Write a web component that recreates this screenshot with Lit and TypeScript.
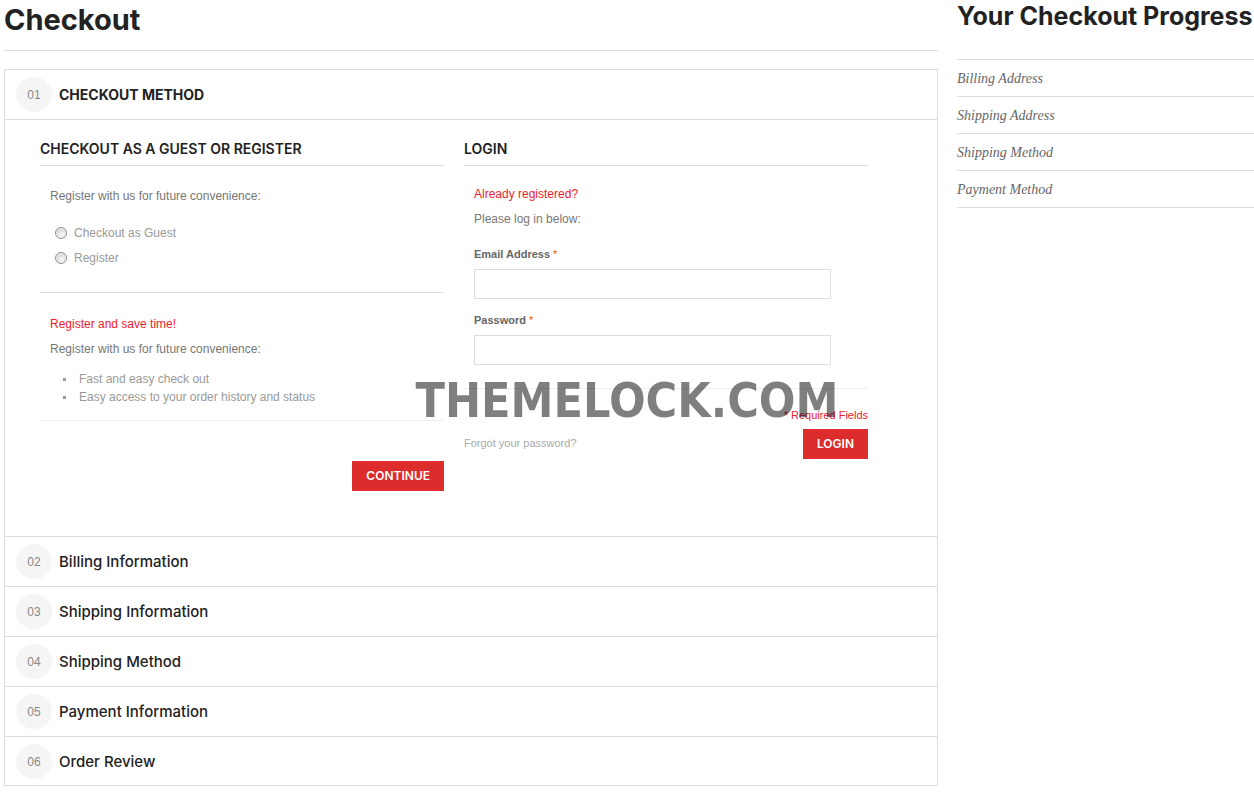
import { LitElement, html, css, nothing } from "lit";
import { customElement, state } from "lit/decorators.js";

interface Step {
  title: string;
}

const STEPS: Step[] = [
  { title: "Checkout Method" },
  { title: "Billing Information" },
  { title: "Shipping Information" },
  { title: "Shipping Method" },
  { title: "Payment Information" },
  { title: "Order Review" },
];

const PROGRESS = ["Billing Address", "Shipping Address", "Shipping Method", "Payment Method"];

@customElement("checkout-method")
class CheckoutMethod extends LitElement {
  static styles = css`
    :host {
      display: grid;
      grid-template-columns: 1fr 1fr;
      gap: 20px;
      padding: 19px 69px 45px 35px;
      font: 12px/18px "Liberation Sans", Arial, sans-serif;
      color: #777;
    }
    h3 {
      margin: 0;
      padding-bottom: 6px;
      border-bottom: 1px solid #ddd;
      font: 600 14px/20px Inter, sans-serif;
      color: #222;
      text-transform: uppercase;
    }
    h4,
    p,
    ul,
    form {
      margin: 0;
      padding: 0;
    }
    h4 {
      margin-bottom: 7px;
      font-size: 12px;
      font-weight: 400;
      color: #ee1c2e;
    }
    .block {
      padding: 21px 10px 0;
    }
    .login .block {
      padding-top: 19px;
    }
    .choices {
      display: grid;
      gap: 7px;
      padding: 19px 4px 25px;
      border: 0;
      margin: 0;
    }
    .choice {
      display: flex;
      align-items: center;
      gap: 7px;
      color: #999;
    }
    .choice input {
      appearance: none;
      width: 12px;
      height: 12px;
      margin: 0 0 0 1px;
      border: 1px solid #8e8f8f;
      border-radius: 50%;
      background: radial-gradient(circle at 60% 65%, #f4f4f4 0 15%, #c8cbce 75%);
      box-shadow: inset 0 0 0 1px #f4f4f4;
    }
    .choice input:checked {
      background: radial-gradient(circle, #333 0 30%, #ddd 40%);
    }
    .benefits {
      border-top: 1px solid #ddd;
      border-bottom: 1px solid #eee;
      padding: 22px 10px 14px;
    }
    ul {
      list-style: none;
      margin-top: 12px;
      color: #999;
    }
    li {
      display: flex;
      align-items: center;
      gap: 13px;
      padding-left: 13px;
    }
    li::before {
      content: "";
      width: 3px;
      height: 3px;
      background: #999;
    }
    .actions {
      display: flex;
      justify-content: flex-end;
      padding-top: 40px;
    }
    button {
      height: 30px;
      padding: 0 14px;
      border: 0;
      border-radius: 0;
      background: #dc2c2c;
      color: #fff;
      font: 600 12px/30px Inter, sans-serif;
      text-transform: uppercase;
      cursor: pointer;
    }
    .field {
      display: block;
      margin-top: 12px;
    }
    .field.first {
      margin-top: 17px;
    }
    label.name {
      display: block;
      margin-bottom: 6px;
      font-size: 11px;
      font-weight: 700;
      color: #666;
    }
    .star {
      color: #eb540a;
      font-weight: 400;
    }
    .field input {
      display: block;
      box-sizing: border-box;
      width: 93%;
      height: 30px;
      padding: 0 8px;
      border: 1px solid #ddd;
      background: #fff;
      font: inherit;
      color: #666;
    }
    .required {
      margin-top: 23px;
      padding: 17px 0 5px;
      border-top: 1px solid #eee;
      font-size: 11px;
      text-align: right;
      color: #ee1c2e;
    }
    .foot {
      display: flex;
      align-items: flex-start;
      justify-content: space-between;
    }
    .foot a {
      font-size: 11px;
      line-height: 28px;
      color: #aaa;
      text-decoration: none;
    }
  `;

  render() {
    return html`
      <section>
        <h3>Checkout as a Guest or Register</h3>
        <div class="block">
          <p>Register with us for future convenience:</p>
          <fieldset class="choices" aria-label="Checkout type">
            <label class="choice"><input type="radio" name="method" value="guest" />Checkout as Guest</label>
            <label class="choice"><input type="radio" name="method" value="register" />Register</label>
          </fieldset>
        </div>
        <div class="benefits">
          <h4>Register and save time!</h4>
          <p>Register with us for future convenience:</p>
          <ul>
            <li>Fast and easy check out</li>
            <li>Easy access to your order history and status</li>
          </ul>
        </div>
        <div class="actions"><button type="button">Continue</button></div>
      </section>
      <section class="login">
        <h3>Login</h3>
        <form @submit=${(e: Event) => e.preventDefault()}>
          <div class="block">
            <h4>Already registered?</h4>
            <p>Please log in below:</p>
            <div class="field first">
              <label class="name" for="email">Email Address <span class="star">*</span></label>
              <input id="email" type="email" />
            </div>
            <div class="field">
              <label class="name" for="password">Password <span class="star">*</span></label>
              <input id="password" type="password" />
            </div>
          </div>
          <p class="required">* Required Fields</p>
          <div class="foot">
            <a href="#forgot">Forgot your password?</a>
            <button type="submit">Login</button>
          </div>
        </form>
      </section>
    `;
  }
}

@customElement("app-root")
class AppRoot extends LitElement {
  static styles = css`
    :host {
      display: grid;
      grid-template-columns: minmax(0, 1fr) 297px;
      gap: 19px;
      align-items: start;
      padding-left: 4px;
      background: #fff;
      color: #222;
      font: 12px/18px "Liberation Sans", Arial, sans-serif;
    }
    h1,
    h2,
    ol,
    ul {
      margin: 0;
      padding: 0;
      list-style: none;
    }
    h1 {
      padding-bottom: 10px;
      margin-bottom: 18px;
      border-bottom: 1px solid #ddd;
      font: 700 29px/40px Inter, sans-serif;
    }
    .steps {
      border: 1px solid #ddd;
    }
    .step + .step {
      border-top: 1px solid #ddd;
    }
    .step:last-child .head {
      padding-bottom: 6px;
    }
    h2.title {
      font: 500 15px/20px Inter, sans-serif;
    }
    .head {
      display: flex;
      align-items: center;
      gap: 7px;
      width: 100%;
      box-sizing: border-box;
      padding: 7px 11px;
      border: 0;
      background: none;
      color: inherit;
      font: inherit;
      text-align: left;
      cursor: pointer;
    }
    .active .head {
      border-bottom: 1px solid #ddd;
      font-size: 14px;
      font-weight: 700;
      text-transform: uppercase;
    }
    .number {
      width: 36px;
      height: 35px;
      border-radius: 50%;
      background: #f5f5f5;
      color: #888;
      font: 12px/36px "Liberation Sans", Arial, sans-serif;
      text-align: center;
    }
    aside h2 {
      padding: 1px 0 28px;
      font: 700 25px/30px Inter, sans-serif;
      white-space: nowrap;
    }
    aside ul {
      border-top: 1px solid #ddd;
    }
    aside li {
      padding: 10px 0 8px;
      border-bottom: 1px solid #ddd;
      font: italic 14px/18px "Liberation Serif", serif;
      color: #666;
    }
    .watermark {
      position: fixed;
      inset: 0;
      display: grid;
      place-items: center;
      padding-top: 3px;
      pointer-events: none;
      font: 700 48px/56px "DejaVu Sans Condensed", "DejaVu Sans", sans-serif;
      color: rgba(0, 0, 0, 0.5);
    }
  `;

  @state() private open = 0;

  render() {
    return html`
      <main>
        <h1>Checkout</h1>
        <ol class="steps">
          ${STEPS.map(
            (step, i) => html`
              <li class="step ${i === this.open ? "active" : ""}">
                <h2 class="title">
                  <button class="head" type="button" @click=${() => (this.open = i)}>
                    <span class="number">0${i + 1}</span>${step.title}
                  </button>
                </h2>
                ${i === 0 && this.open === 0 ? html`<checkout-method></checkout-method>` : nothing}
              </li>
            `
          )}
        </ol>
      </main>
      <aside>
        <h2>Your Checkout Progress</h2>
        <ul>
          ${PROGRESS.map((name) => html`<li>${name}</li>`)}
        </ul>
      </aside>
      <div class="watermark">THEMELOCK.COM</div>
    `;
  }
}
